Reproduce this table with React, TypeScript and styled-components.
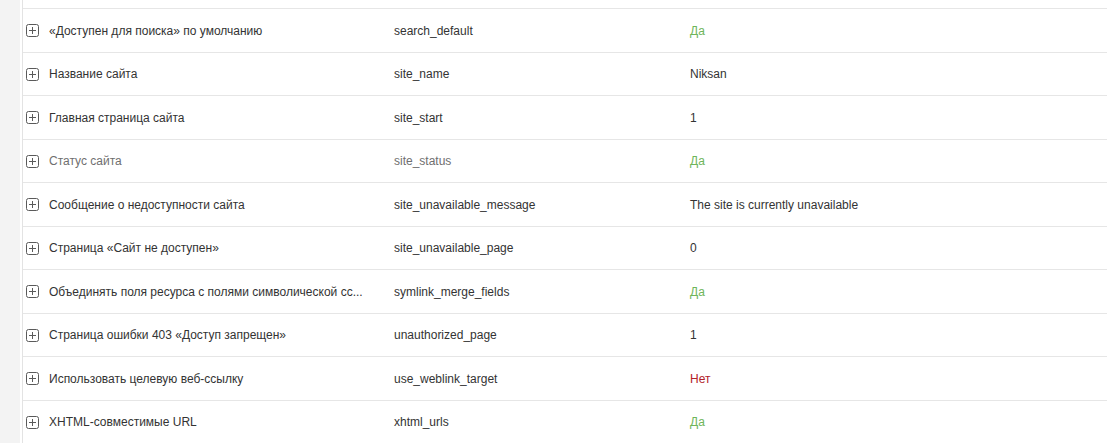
import React from 'react';
import styled, { createGlobalStyle } from 'styled-components';

const GlobalStyle = createGlobalStyle`
  html, body {
    margin: 0;
    padding: 0;
    background: #ffffff;
    font-family: "Liberation Sans", Arial, sans-serif;
    overflow: hidden;
  }
`;

type Setting = {
  name: string;
  key: string;
  value: string;
  kind?: 'yes' | 'no';
  muted?: boolean;
};

const settings: Setting[] = [
  { name: '«Доступен для поиска» по умолчанию', key: 'search_default', value: 'Да', kind: 'yes' },
  { name: 'Название сайта', key: 'site_name', value: 'Niksan' },
  { name: 'Главная страница сайта', key: 'site_start', value: '1' },
  { name: 'Статус сайта', key: 'site_status', value: 'Да', kind: 'yes', muted: true },
  { name: 'Сообщение о недоступности сайта', key: 'site_unavailable_message', value: 'The site is currently unavailable' },
  { name: 'Страница «Сайт не доступен»', key: 'site_unavailable_page', value: '0' },
  { name: 'Объединять поля ресурса с полями символической сс...', key: 'symlink_merge_fields', value: 'Да', kind: 'yes' },
  { name: 'Страница ошибки 403 «Доступ запрещен»', key: 'unauthorized_page', value: '1' },
  { name: 'Использовать целевую веб-ссылку', key: 'use_weblink_target', value: 'Нет', kind: 'no' },
  { name: 'XHTML-совместимые URL', key: 'xhtml_urls', value: 'Да', kind: 'yes' },
];

const Page = styled.div`
  display: flex;
  height: 443px;
  background: #ffffff;
`;

const Gutter = styled.div`
  width: 20px;
  flex-shrink: 0;
  background: #f3f3f3;
  border-right: 2px solid #ffffff;
`;

const Grid = styled.div`
  flex: 1;
  border-left: 1px solid #e3e3e3;
  padding-top: 8px;
  overflow: hidden;
`;

const Row = styled.div<{ $muted?: boolean }>`
  display: grid;
  grid-template-columns: 26px 335px 296px 1fr;
  align-items: center;
  height: 43.5px;
  box-sizing: border-box;
  border-top: 1px solid #e6e6e6;
  padding-top: 1px;
  font-size: 12px;
  color: ${({ $muted }) => ($muted ? '#6f6f6f' : '#333333')};
`;

const Expander = styled.div`
  display: flex;
  align-items: center;
  padding-left: 3px;
  color: #5a5a5a;
`;

const Cell = styled.div`
  white-space: nowrap;
  overflow: hidden;
  padding-right: 4px;
`;

const KeyCell = styled(Cell)`
  padding-left: 10px;
`;

const ValueCell = styled(Cell)<{ $kind?: 'yes' | 'no' }>`
  padding-left: 10px;
  color: ${({ $kind }) => ($kind === 'yes' ? '#6fb55a' : $kind === 'no' ? '#b3232a' : 'inherit')};
`;

const PlusBox = () => (
  <svg width="13" height="13" viewBox="0 0 13 13" fill="none">
    <rect x="0.5" y="0.5" width="12" height="12" rx="2" stroke="currentColor" />
    <path d="M6.5 3v7M3 6.5h7" stroke="currentColor" />
  </svg>
);

export default function App() {
  return (
    <>
      <GlobalStyle />
      <Page>
        <Gutter />
        <Grid>
          {settings.map((s) => (
            <Row key={s.key} $muted={s.muted}>
              <Expander>
                <PlusBox />
              </Expander>
              <Cell>{s.name}</Cell>
              <KeyCell>{s.key}</KeyCell>
              <ValueCell $kind={s.kind}>{s.value}</ValueCell>
            </Row>
          ))}
        </Grid>
      </Page>
    </>
  );
}
